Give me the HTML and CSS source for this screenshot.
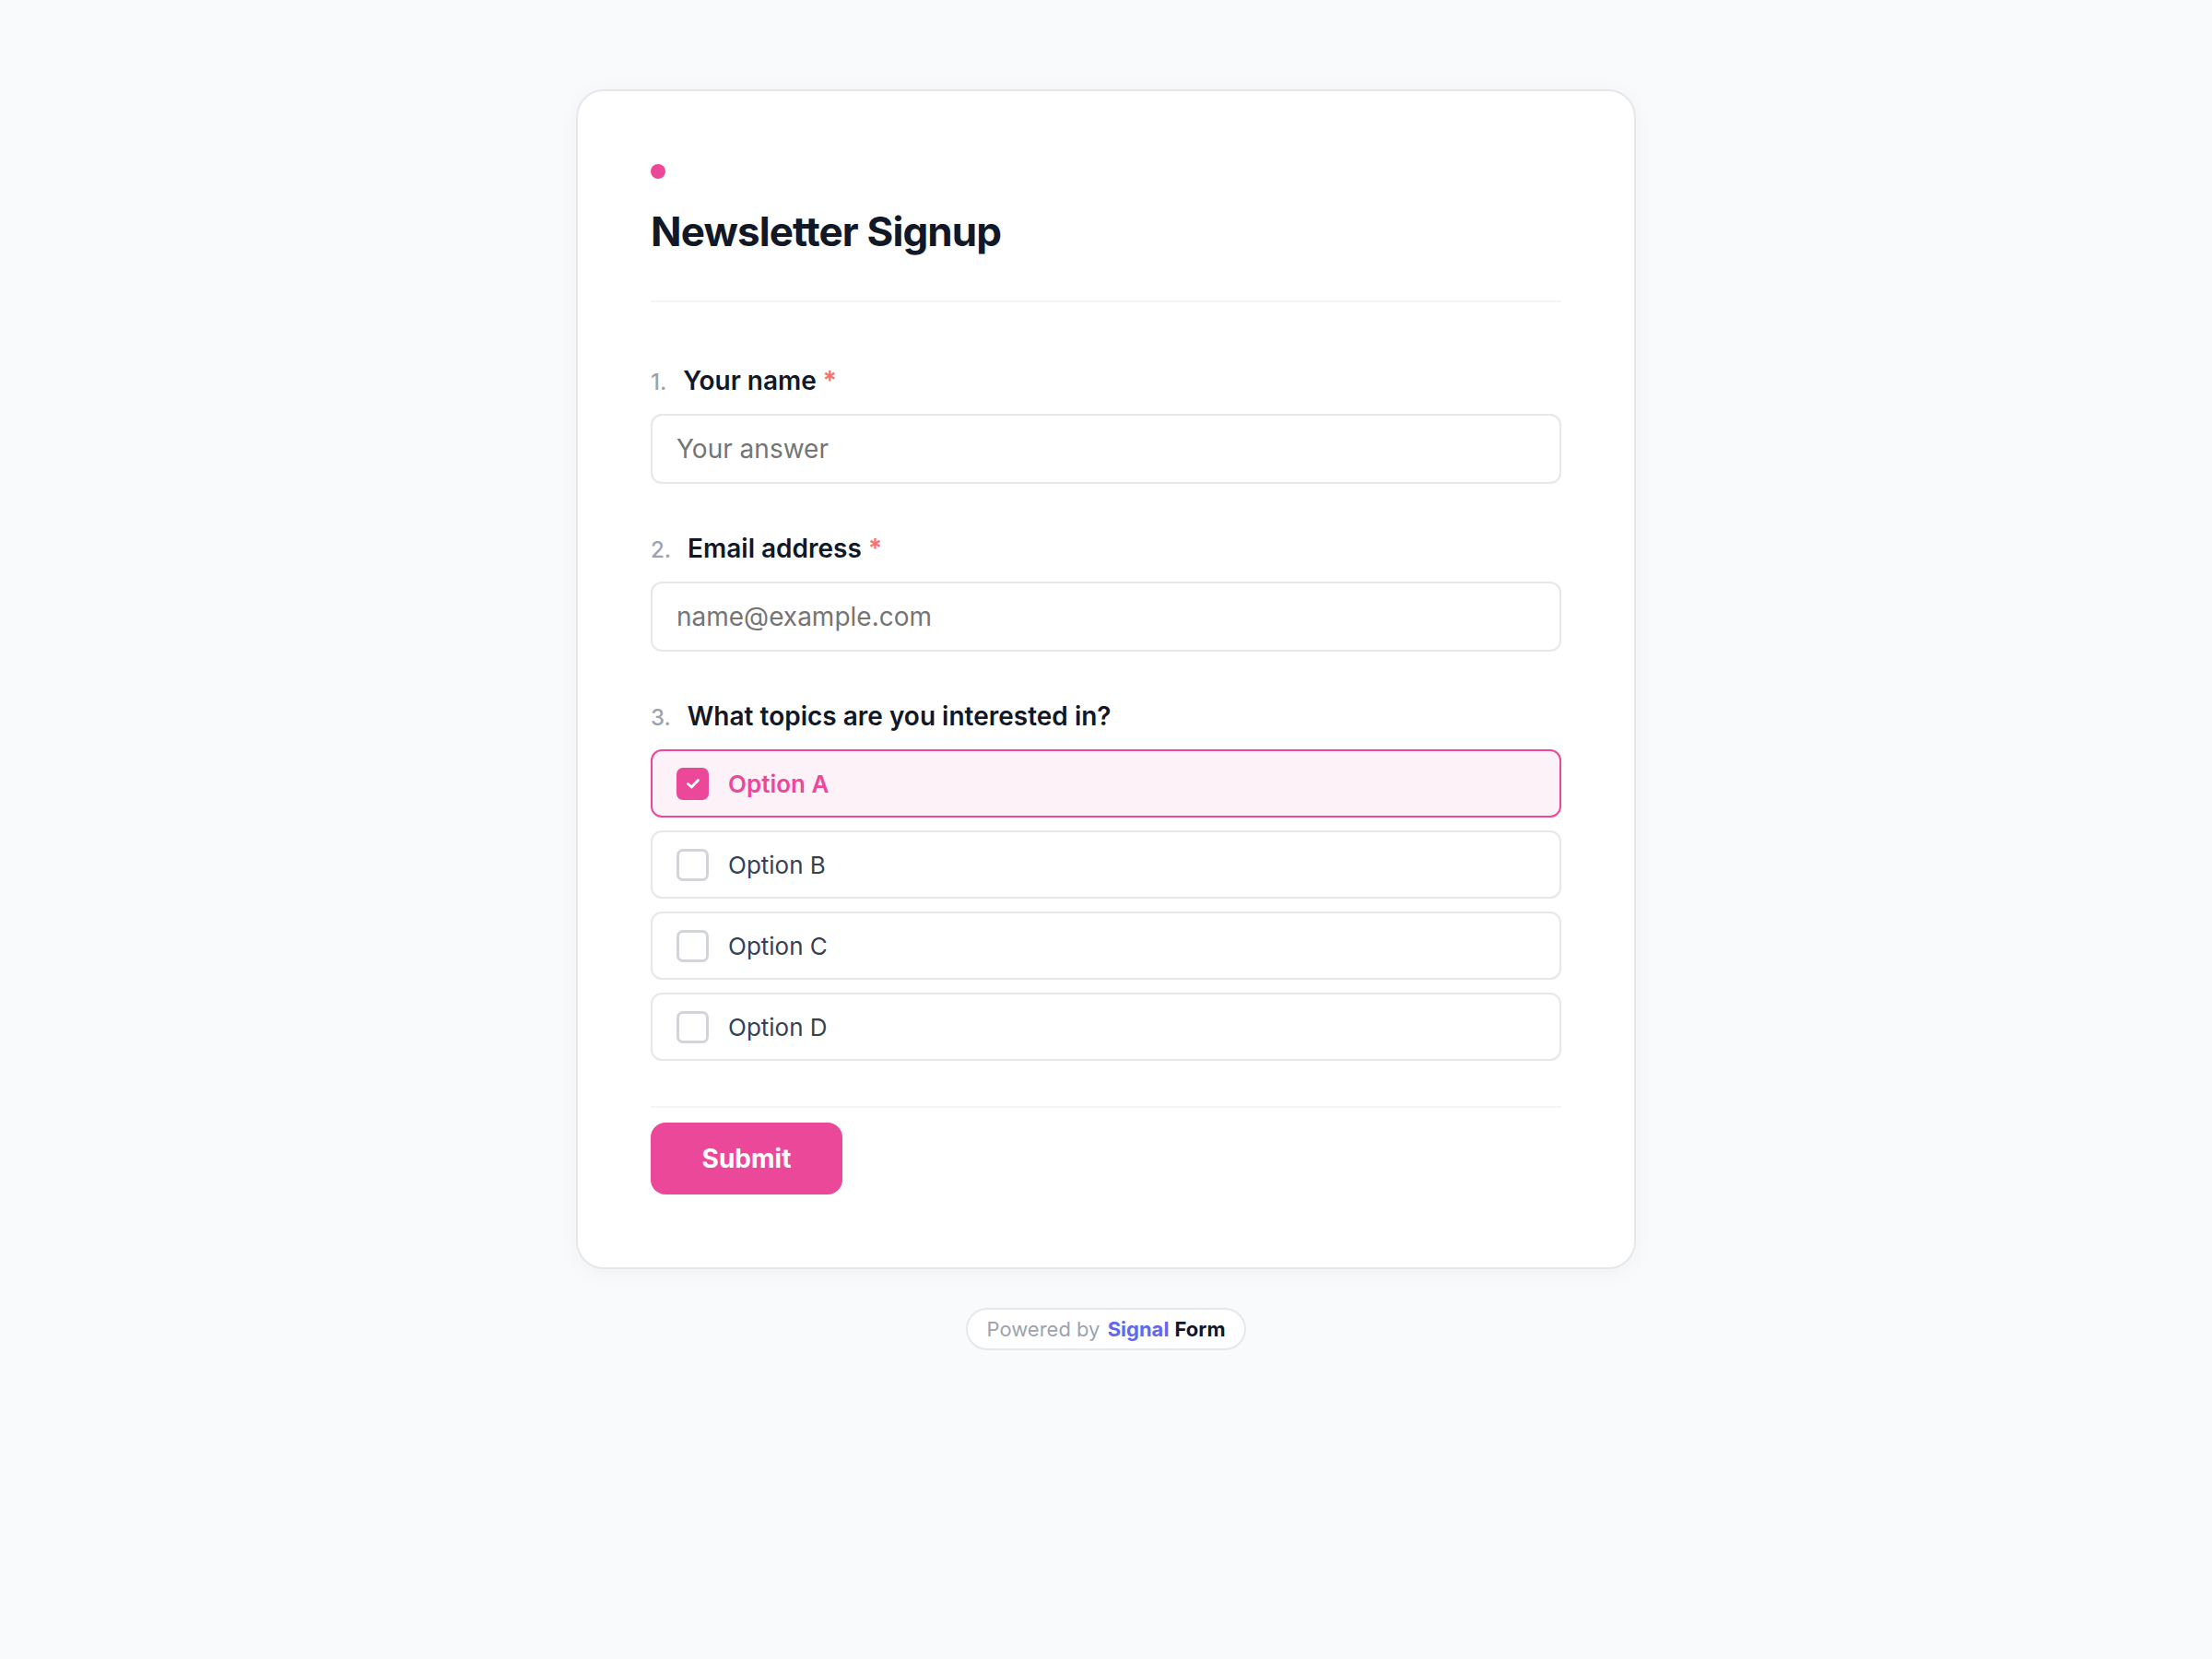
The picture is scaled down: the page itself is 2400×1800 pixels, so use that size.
FILE: index.html
```html
<!DOCTYPE html>
<html lang="en">
<head>
<meta charset="utf-8">
<title>Newsletter Signup</title>
<link rel="stylesheet" href="styles.css">
</head>
<body>
<main class="page">
  <form class="card">
    <header class="card-header">
      <span class="dot"></span>
      <h1 class="title">Newsletter Signup</h1>
    </header>

    <div class="questions">
      <div class="question">
        <label class="q-label" for="name"><span class="q-num">1.</span><span class="q-text">Your name</span><span class="req">*</span></label>
        <input class="text-input" id="name" type="text" placeholder="Your answer">
      </div>

      <div class="question">
        <label class="q-label" for="email"><span class="q-num">2.</span><span class="q-text">Email address</span><span class="req">*</span></label>
        <input class="text-input" id="email" type="email" placeholder="name@example.com">
      </div>

      <div class="question">
        <div class="q-label"><span class="q-num">3.</span><span class="q-text">What topics are you interested in?</span></div>
        <div class="options">
          <div class="option selected">
            <span class="box checked"><svg viewBox="0 0 20 20" width="20" height="20"><polyline points="4.5,10.5 8.3,14 15.5,6.5" fill="none" stroke="#fff" stroke-width="2.8" stroke-linecap="round" stroke-linejoin="round"/></svg></span>
            <span class="opt-text">Option A</span>
          </div>
          <div class="option">
            <span class="box"></span>
            <span class="opt-text">Option B</span>
          </div>
          <div class="option">
            <span class="box"></span>
            <span class="opt-text">Option C</span>
          </div>
          <div class="option">
            <span class="box"></span>
            <span class="opt-text">Option D</span>
          </div>
        </div>
      </div>
    </div>

    <footer class="card-footer">
      <button class="submit" type="button">Submit</button>
    </footer>
  </form>

  <div class="powered"><span class="pw-text">Powered by</span> <strong class="brand-a">Signal</strong> <strong class="brand-b">Form</strong></div>
</main>
</body>
</html>
```

FILE: styles.css
```css
* { box-sizing: border-box; }

html, body {
  margin: 0;
  padding: 0;
  background: #f9fafb;
}

body {
  font-family: Inter, "Noto Sans", "Liberation Sans", sans-serif;
  color: #111827;
}

.page {
  display: flex;
  flex-direction: column;
  align-items: center;
  padding-top: 97px;
  padding-bottom: 80px;
}

.card {
  width: 1150px;
  background: #ffffff;
  border: 2px solid #e5e7eb;
  border-radius: 30px;
  padding: 79px;
  box-shadow: 0 4px 24px rgba(17, 24, 39, 0.04);
  display: flex;
  flex-direction: column;
}

.card-header {
  display: flex;
  flex-direction: column;
  align-items: flex-start;
  padding-bottom: 48px;
  border-bottom: 2px solid #f3f4f6;
}

.dot {
  width: 16px;
  height: 16px;
  border-radius: 50%;
  background: #ec4899;
  margin-bottom: 31px;
}

.title {
  margin: 0;
  font-size: 44px;
  line-height: 53px;
  font-weight: 700;
  letter-spacing: -0.02em;
  color: #111827;
}

.questions {
  display: flex;
  flex-direction: column;
  gap: 54px;
  padding-top: 69px;
}

.question {
  display: flex;
  flex-direction: column;
}

.q-label {
  display: flex;
  align-items: baseline;
  line-height: 32px;
  margin-bottom: 18px;
}

.q-num {
  font-size: 24px;
  font-weight: 500;
  color: #9ca3af;
  margin-right: 18px;
}

.q-text {
  font-size: 28px;
  font-weight: 600;
  color: #111827;
}

.req {
  font-size: 28px;
  font-weight: 600;
  color: #f87171;
  margin-left: 7px;
}

.text-input {
  width: 100%;
  height: 76px;
  border: 2px solid #e5e7eb;
  border-radius: 12px;
  padding: 0 26px;
  font-family: inherit;
  font-size: 28px;
  color: #111827;
  background: #fff;
  outline: none;
}

.text-input::placeholder {
  color: #757575;
}

.options {
  display: flex;
  flex-direction: column;
  gap: 14px;
}

.option {
  display: flex;
  align-items: center;
  height: 74px;
  padding: 0 26px;
  border: 2px solid #e5e7eb;
  border-radius: 12px;
  background: #fff;
}

.option.selected {
  border-color: #ec4899;
  background: #fdf2f8;
}

.box {
  width: 35px;
  height: 35px;
  flex: none;
  border: 3px solid #d1d5db;
  border-radius: 7px;
  background: #fff;
  display: flex;
  align-items: center;
  justify-content: center;
  margin-right: 21px;
}

.box.checked {
  background: #ec4899;
  border-color: #ec4899;
}

.opt-text {
  font-size: 26px;
  color: #374151;
}

.option.selected .opt-text {
  color: #ec4899;
  font-weight: 600;
}

.card-footer {
  margin-top: 49px;
  padding-top: 16px;
  border-top: 2px solid #f3f4f6;
  display: flex;
}

.submit {
  width: 208px;
  height: 78px;
  border: none;
  border-radius: 16px;
  background: #ec4899;
  color: #fff;
  font-family: inherit;
  font-size: 28px;
  font-weight: 700;
  cursor: pointer;
}

.powered {
  margin-top: 42px;
  height: 46px;
  padding: 0 20px;
  border: 2px solid #e5e7eb;
  border-radius: 999px;
  background: #fff;
  font-size: 22px;
  line-height: 42px;
  color: #9ca3af;
  white-space: nowrap;
}

.pw-text {
  margin-right: 2px;
}

.brand-a {
  color: #6366f1;
  font-weight: 700;
}

.brand-b {
  color: #111827;
  font-weight: 700;
}
```
